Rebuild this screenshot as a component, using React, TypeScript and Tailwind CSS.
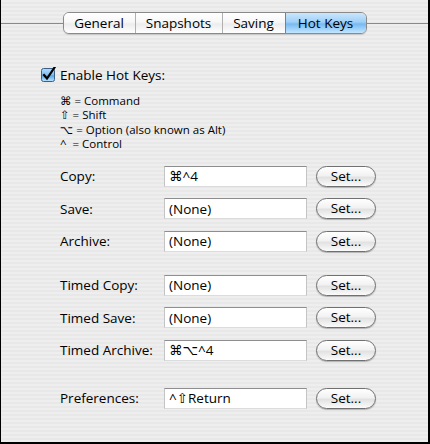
const font = "font-['Lucida_Grande','Open_Sans','DejaVu_Sans',sans-serif]";

const tabs = [
  { label: 'General', w: 'w-[71px]' },
  { label: 'Snapshots', w: 'w-[87px]' },
  { label: 'Saving', w: 'w-[63px]' },
  { label: 'Hot Keys', w: 'w-[81px]', active: true },
];

function Checkbox() {
  return (
    <svg width="15" height="16" viewBox="0 0 15 16">
      <defs>
        <linearGradient id="cb" x1="0" y1="0" x2="0" y2="1">
          <stop offset="0" stopColor="#b5dcfb" />
          <stop offset="0.5" stopColor="#7dbcf1" />
          <stop offset="0.55" stopColor="#5aa6ea" />
          <stop offset="1" stopColor="#bfe6ff" />
        </linearGradient>
      </defs>
      <rect x="0.5" y="1.5" width="13" height="13" rx="2" fill="url(#cb)" stroke="#3c5f86" />
      <path d="M3 8 L6 11.5 L13.5 0.5" fill="none" stroke="#000" strokeWidth="2.2" strokeLinecap="square" />
    </svg>
  );
}

function Field({ value }: { value: string }) {
  return (
    <div className="w-[143px] h-[21px] bg-white border-t border-t-[#8e8e8e] border-x border-x-[#c4c4c4] border-b border-b-[#dcdcdc] pl-[4px] flex items-center text-[13.5px] text-black">
      {value}
    </div>
  );
}

function SetButton() {
  return (
    <button className="w-[60px] h-[21px] rounded-full border border-[#707070] bg-[linear-gradient(#ffffff,#f2f2f2_45%,#e2e2e2_55%,#fbfbfb)] shadow-[0_1px_1px_rgba(0,0,0,0.25)] text-[13.5px] text-black flex items-center justify-center leading-none">
      Set...
    </button>
  );
}

function Row({ label, value }: { label: string; value: string }) {
  return (
    <div className="flex items-center h-[22px]">
      <div className="w-[104px] text-[13.5px] text-black">{label}</div>
      <Field value={value} />
      <div className="ml-[9px]">
        <SetButton />
      </div>
    </div>
  );
}

export default function App() {
  return (
    <div
      className={`${font} w-[430px] h-[444px] overflow-hidden border-l border-r-2 border-b-2 border-black bg-[repeating-linear-gradient(to_bottom,#eeeeee_0px,#eeeeee_2px,#e8e8e8_2px,#e8e8e8_4px)] text-black`}
    >
      {/* Tab bar */}
      <div className="flex items-center pt-[12px]">
        <div className="flex-1 h-px bg-[#8a8a8a]" />
        <div className="flex h-[22px] rounded-[6px] border border-[#8a8a8a] overflow-hidden shadow-[0_1px_1px_rgba(0,0,0,0.15)]">
          {tabs.map((t, i) => (
            <div
              key={t.label}
              className={`${t.w} flex items-center justify-center text-[13.5px] ${
                i > 0 ? 'border-l border-[#b0b0b0]' : ''
              } ${
                t.active
                  ? 'bg-[linear-gradient(#cbe6fc,#9fd0f7_45%,#76b9f2_55%,#c2e6ff)] border-l-[#5a86b8]'
                  : 'bg-[linear-gradient(#ffffff,#f7f7f7_45%,#ececec_55%,#ffffff)]'
              }`}
            >
              {t.label}
            </div>
          ))}
        </div>
        <div className="flex-1 h-px bg-[#8a8a8a]" />
      </div>

      <div className="pl-[40px]">
        {/* Enable */}
        <div className="mt-[33px] flex items-center h-[16px] gap-[4px]">
          <Checkbox />
          <span className="text-[13.5px]">Enable Hot Keys:</span>
        </div>

        {/* Legend */}
        <div className="mt-[11px] pl-[19px] text-[11.5px] leading-[14.33px]">
          <div>⌘ = Command</div>
          <div>⇧ = Shift</div>
          <div>⌥ = Option (also known as Alt)</div>
          <div>^&nbsp; = Control</div>
        </div>

        <div className="pl-[19px]">
          <div className="mt-[14px] flex flex-col gap-[10.5px]">
            <Row label="Copy:" value="⌘^4" />
            <Row label="Save:" value="(None)" />
            <Row label="Archive:" value="(None)" />
          </div>
          <div className="mt-[22px] flex flex-col gap-[10.5px]">
            <Row label="Timed Copy:" value="(None)" />
            <Row label="Timed Save:" value="(None)" />
            <Row label="Timed Archive:" value="⌘⌥^4" />
          </div>
          <div className="mt-[26px]">
            <Row label="Preferences:" value="^⇧Return" />
          </div>
        </div>
      </div>
    </div>
  );
}
